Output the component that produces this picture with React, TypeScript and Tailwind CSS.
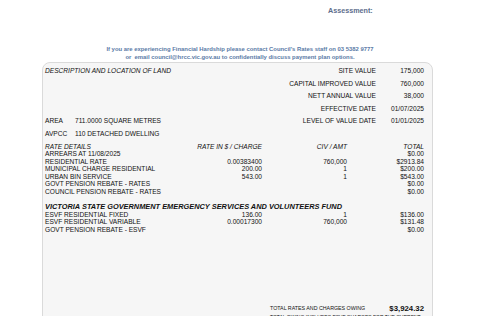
import React from "react";

const rates = [
  ["ARREARS AT 11/08/2025", "", "", "$0.00"],
  ["RESIDENTIAL RATE", "0.00383400", "760,000", "$2913.84"],
  ["MUNICIPAL CHARGE RESIDENTIAL", "200.00", "1", "$200.00"],
  ["URBAN BIN SERVICE", "543.00", "1", "$543.00"],
  ["GOVT PENSION REBATE - RATES", "", "", "$0.00"],
  ["COUNCIL PENSION REBATE - RATES", "", "", "$0.00"],
];

const esvf = [
  ["ESVF RESIDENTIAL FIXED", "136.00", "1", "$136.00"],
  ["ESVF RESIDENTIAL VARIABLE", "0.00017300", "760,000", "$131.48"],
  ["GOVT PENSION REBATE - ESVF", "", "", "$0.00"],
];

const values = [
  ["SITE VALUE", "175,000"],
  ["CAPITAL IMPROVED VALUE", "760,000"],
  ["NETT ANNUAL VALUE", "38,000"],
  ["EFFECTIVE DATE", "01/07/2025"],
  ["LEVEL OF VALUE DATE", "01/01/2025"],
];

function Row({ r }: { r: string[] }) {
  return (
    <div className="grid grid-cols-[1fr_70px_85px_77px] h-[7.5px] leading-[7.5px]">
      <span>{r[0]}</span>
      <span className="text-right">{r[1]}</span>
      <span className="text-right">{r[2]}</span>
      <span className="text-right">{r[3]}</span>
    </div>
  );
}

export default function App() {
  return (
    <div className="w-[480px] h-[316px] overflow-hidden bg-white font-['Liberation_Sans',Arial,sans-serif] text-[#111]">
      <div className="pt-[6px] pl-[328px] h-[16px] text-[7.2px] leading-[10px] font-bold text-[#5d6d8c]">
        Assessment:
      </div>
      <div className="mt-[29px] text-center text-[5.9px] leading-[8px] font-bold text-[#5a7aa6]">
        <div>If you are experiencing Financial Hardship please contact Council's Rates staff on 03 5382 9777</div>
        <div>or&nbsp; email council@hrcc.vic.gov.au to confidentially discuss payment plan options.</div>
      </div>
      <div className="mt-[1px] ml-[42px] w-[391px] h-[300px] rounded-[8px] border border-[#dadada] bg-[#f6f6f6] pt-[2px] pl-[2px] pr-[8px] text-[6.6px]">
        <div className="grid grid-cols-[1fr_150px_48px] auto-rows-[12.6px] leading-[12.6px]">
          <span className="italic">DESCRIPTION AND LOCATION OF LAND</span>
          <span className="text-right">{values[0][0]}</span>
          <span className="text-right">{values[0][1]}</span>
          {values.slice(1, 4).map((v) => (
            <React.Fragment key={v[0]}>
              <span></span>
              <span className="text-right">{v[0]}</span>
              <span className="text-right">{v[1]}</span>
            </React.Fragment>
          ))}
          <span className="flex">
            <span className="w-[30px]">AREA</span>
            <span>711.0000 SQUARE METRES</span>
          </span>
          <span className="text-right">{values[4][0]}</span>
          <span className="text-right">{values[4][1]}</span>
          <span className="flex">
            <span className="w-[30px]">AVPCC</span>
            <span>110 DETACHED DWELLING</span>
          </span>
          <span></span>
          <span></span>
        </div>
        <div className="mt-[2px]">
          <div className="grid grid-cols-[1fr_70px_85px_77px] h-[7.5px] leading-[7.5px] italic">
            <span>RATE DETAILS</span>
            <span className="text-right">RATE IN $ / CHARGE</span>
            <span className="text-right">CIV / AMT</span>
            <span className="text-right">TOTAL</span>
          </div>
          {rates.map((r) => (
            <Row key={r[0]} r={r} />
          ))}
        </div>
        <div className="mt-[6.75px] h-[9px] leading-[9px] text-[7.4px] font-bold italic">
          VICTORIA STATE GOVERNMENT EMERGENCY SERVICES AND VOLUNTEERS FUND
        </div>
        <div>
          {esvf.map((r) => (
            <Row key={r[0]} r={r} />
          ))}
        </div>
        <div className="mt-[71px] pl-[225px] flex items-center justify-between h-[10px]">
          <span className="text-[5.3px]">TOTAL RATES AND CHARGES OWING</span>
          <span className="text-[7.8px] font-bold">$3,924.32</span>
        </div>
        <div className="pl-[225px] text-[5px] leading-[7px]">
          TOTAL OWING INCLUDES ESVF CHARGES FOR THE CURRENT YEAR
        </div>
      </div>
    </div>
  );
}
